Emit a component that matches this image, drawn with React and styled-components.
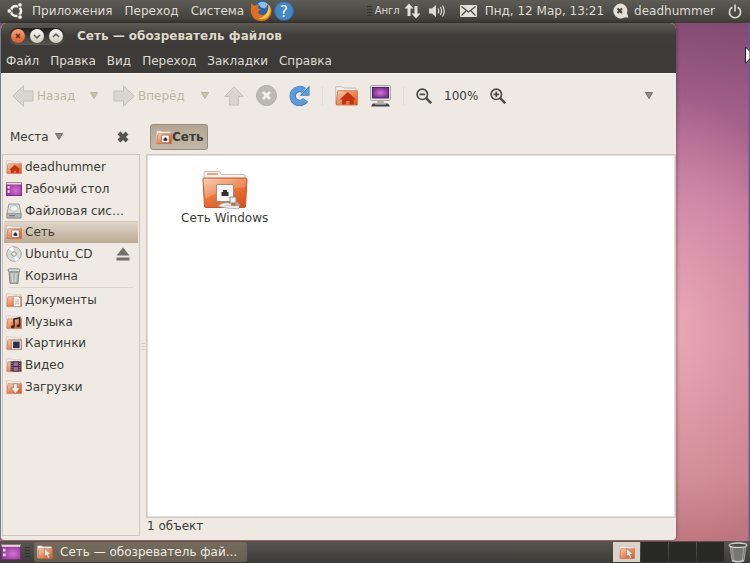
import styled, { createGlobalStyle } from 'styled-components';

const Global = createGlobalStyle`
  * { box-sizing: border-box; }
  body {
    margin: 0;
    font-family: "DejaVu Sans", sans-serif;
    font-size: 12px;
    line-height: 16px;
    color: #3c3b37;
  }
  button {
    margin: 0;
    padding: 0;
    border: 0;
    background: none;
    color: inherit;
    font: inherit;
    white-space: nowrap;
  }
  svg { display: block; flex: none; }
`;

const Desktop = styled.div`
  min-height: 100vh;
  display: flex;
  flex-direction: column;
  background:
    linear-gradient(to right, transparent calc(100% - 2px), #6a5a9c calc(100% - 1px)),
    radial-gradient(ellipse 130px 230px at calc(100% - 74px) 58%, rgba(255, 196, 204, 0.6), transparent),
    linear-gradient(to bottom left, rgba(60, 30, 70, 0.2), transparent 20%),
    linear-gradient(#8a4f75, #ac6690 20%, #c2759a 38%, #ca8095 62%, #c98089 85%, #b8707b);
`;

const Panel = styled.header`
  height: 23px;
  padding: 0 8px 1px 7px;
  display: flex;
  align-items: center;
  color: #dfdbd2;
  background: linear-gradient(#5c5b54, #45443f 80%, #3c3b37);
`;

const PanelMenus = styled.nav`
  display: flex;
  gap: 12px;
  margin: 0 6px 0 8px;
`;

const Tray = styled.div`
  display: flex;
  align-items: center;
  gap: 4px;
  margin-left: auto;
`;

const TrayGroup = styled.div`
  display: flex;
  align-items: center;
  gap: ${p => p.$gap}px;
  margin-right: ${p => p.$after || 0}px;
`;

const TrayText = styled.span`
  white-space: nowrap;
  font-size: ${p => (p.$small ? 10 : 12)}px;
`;

const Grip = styled.span`
  width: 5px;
  height: 11px;
  background: repeating-linear-gradient(#33322e 0 1px, transparent 1px 3px);
`;

const Window = styled.main`
  flex: 1;
  margin: 0 74px 1px 0;
  display: flex;
  flex-direction: column;
  border-left: 1px solid #777d8b;
  border-radius: 6px 6px 4px 4px;
  overflow: hidden;
  background: #eeeae3;
  box-shadow: 0 0 4px rgba(0, 0, 0, 0.4);
`;

const TitleBar = styled.div`
  height: 26px;
  padding-left: 8px;
  display: flex;
  align-items: center;
  gap: 12px;
  background: linear-gradient(#5b5a54, #3e3d39 50%, #3c3b37);
`;

const Title = styled.h1`
  margin: 0;
  font-size: 12px;
  color: #dfd8c8;
`;

const WindowButtons = styled.div`
  height: 17px;
  padding: 0 2px;
  display: flex;
  align-items: center;
  gap: 5px;
  border-radius: 9px;
  background: linear-gradient(#22211e, #5b5a53);
`;

const RoundButton = styled.button`
  width: 14px;
  height: 14px;
  border-radius: 50%;
  color: ${p => (p.$close ? '#6b2c15' : '#5c5a52')};
  background: ${p => (p.$close ? 'linear-gradient(#f6a27e, #df5a2c)' : 'linear-gradient(#fbfaf7, #cfcbc0)')};
`;

const MenuBar = styled.nav`
  height: 24px;
  padding: 0 0 1px 5px;
  display: flex;
  align-items: center;
  gap: 11px;
  color: #dfdbd2;
  background: #3c3b37;
`;

const Toolbar = styled.div`
  height: 46px;
  padding: 0 20px 2px 11px;
  display: flex;
  align-items: center;
  gap: 12px;
  border-top: 1px solid #f8f6f0;
`;

const Split = styled.div`
  display: flex;
`;

const ToolButton = styled.button`
  width: ${p => p.$w}px;
  display: flex;
  align-items: center;
  gap: 3px;
  &:disabled { color: #bdb5a4; }
`;

const DropButton = styled.button`
  width: 14px;
  display: flex;
  align-items: center;
  justify-content: center;
  color: ${p => (p.$dark ? '#6f6d66' : '#bbb39c')};
  margin-left: ${p => (p.$end ? 'auto' : 0)};
`;

const Separator = styled.span`
  width: 1px;
  height: 18px;
  background: #dfdacf;
`;

const Body = styled.div`
  flex: 1;
  display: grid;
  grid-template-columns: 138px 4px minmax(0, 1fr);
  grid-template-rows: 35px 1fr;
  column-gap: 1px;
  padding-left: 1px;
`;

const PlacesHead = styled.div`
  padding: 0 11px 0 8px;
  display: flex;
  align-items: center;
  justify-content: space-between;
`;

const PathBar = styled.div`
  grid-column: 3;
  display: flex;
  align-items: center;
  padding-left: 4px;
`;

const PathButton = styled.button`
  height: 26px;
  padding: 0 3px 0 5px;
  display: flex;
  align-items: center;
  border: 1px solid #988d7b;
  border-radius: 3px;
  font-weight: bold;
  background: linear-gradient(#b3a793, #c3b8a6);
`;

const Sidebar = styled.aside`
  margin-bottom: 4px;
  padding: 1px;
  border: 1px solid #cdc7bb;
  background: #efebe4;
`;

const Places = styled.ul`
  margin: 0;
  padding: 0;
  list-style: none;
  display: grid;
  grid-template-columns: minmax(0, 1fr);
  grid-auto-rows: 1fr;
  height: ${p => p.$height}px;
`;

const PlaceButton = styled.button`
  width: 100%;
  height: 100%;
  padding: 0 8px 0 2px;
  display: flex;
  align-items: center;
  gap: 3px;
  text-align: left;
  border-top: 1px solid ${p => (p.$active ? '#d3c8b8' : 'transparent')};
  background: ${p => (p.$active ? 'linear-gradient(#ded5c8, #bcaa95)' : 'none')};
  span { flex: 1; min-width: 0; overflow: hidden; text-overflow: ellipsis; }
`;

const Rule = styled.hr`
  height: 1px;
  margin: 1px 5px;
  border: 0;
  background: #dcd6ca;
`;

const Handle = styled.div`
  align-self: center;
  height: 8px;
  background: repeating-linear-gradient(#d3cdc1 0 1px, transparent 1px 3px);
`;

const Content = styled.section`
  display: flex;
  flex-direction: column;
`;

const Files = styled.div`
  flex: 1;
  padding: 15px 34px;
  border: 1px solid #cfc9bd;
  outline: 1px solid #e3ded4;
  outline-offset: -2px;
  background: #fff;
`;

const File = styled.button`
  display: flex;
  flex-direction: column;
  align-items: center;
`;

const Status = styled.footer`
  height: 22px;
  padding: 0 1px;
`;

const Taskbar = styled.footer`
  height: 22px;
  padding-left: 1px;
  display: flex;
  align-items: center;
  gap: 4px;
  background: linear-gradient(#56554f, #3c3b37);
`;

const Task = styled.button`
  width: 213px;
  height: 20px;
  padding: 0 2px 0 3px;
  display: flex;
  align-items: center;
  gap: 7px;
  border-radius: 3px;
  color: #eeebe4;
  background: linear-gradient(#756c5d, #665e50);
`;

const Workspaces = styled.div`
  display: flex;
  gap: 1px;
  margin-left: auto;
`;

const Workspace = styled.button`
  width: 27px;
  height: 20px;
  display: flex;
  align-items: center;
  justify-content: center;
  background: ${p => (p.$active ? '#d9d3c8' : '#292926')};
`;

const Triangle = () => (
  <svg width="8" height="7" viewBox="0 0 8 7"><path d="M0.5 0.5h7L4 6.5z" fill="currentColor" fillOpacity=".75" stroke="currentColor" /></svg>
);

const emblems = {
  home: <path d="M3.500 11L9.500 5.500l6 5.500h-1.700V14.500h-3V12H8.200v2.500h-3V11z" fill="#c23410" />,
  network: <g><rect x="6" y="6" width="8" height="8" rx="1" fill="#fff" stroke="#7b4a38" strokeWidth=".6" /><path d="M8 12V9.500h1V8.500h2v1h1V12z" fill="#222" /></g>,
  documents: <g><path d="M8 4h5l2.500 2.500V15H8z" fill="#f8f7f4" stroke="#98948b" strokeWidth=".7" /><path d="M9.500 8h4.500M9.500 10h4.500M9.500 12h4.500" stroke="#aaa69d" strokeWidth=".8" /></g>,
  music: <path d="M8.500 12.500V5l6-1.500v8" fill="none" stroke="#2e2d2b" strokeWidth="1.700" />,
  pictures: <g><rect x="6" y="5" width="10" height="10" fill="#efeeeb" stroke="#8b8880" strokeWidth=".7" /><rect x="7.500" y="6.500" width="7" height="7" fill="#2f2e47" /></g>,
  video: <g><path d="M5 4h11v11H5z" fill="#3a2c3a" /><path d="M8 5h5v4H8zM8 10h5v4H8z" fill="#9c6c9d" /><path d="M6.300 4v11M14.700 4v11" stroke="#ddd" strokeWidth=".9" strokeDasharray="1 1" /></g>,
  downloads: <path d="M8 4.500h4V9h3l-5 6-5-6h3z" fill="#eeede9" stroke="#8b8780" strokeWidth=".8" />,
  cursor: <path d="M8 4l7 6.500h-3l1.500 3.500-1.800.8-1.500-3.500L8 13z" fill="#e8e5de" stroke="#877b70" strokeWidth=".7" />,
};

const musicNotes = <g fill="#2e2d2b"><ellipse cx="7.200" cy="13" rx="2" ry="1.600" /><ellipse cx="13.200" cy="12" rx="2" ry="1.600" /></g>;

const FolderIcon = ({ kind, size = 16 }) => (
  <svg width={size} height={size} viewBox="0 0 17 16">
    <defs>
      <linearGradient id={`folder-${kind}`} x2="1" y2="1">
        <stop offset="0" stopColor="#f9d2b9" />
        <stop offset=".5" stopColor="#ee8a5a" />
        <stop offset="1" stopColor="#d94f20" />
      </linearGradient>
    </defs>
    <path d="M.5 14V1.500h5l1 1h9V6H2z" fill="#f5f1ec" stroke="#c9b8ab" strokeWidth=".7" />
    <path d="M2 4.500h14.500V15H1z" fill={`url(#folder-${kind})`} stroke="#c6683f" strokeWidth=".6" />
    {emblems[kind]}
    {kind === 'music' && musicNotes}
  </svg>
);

const DesktopIcon = ({ width = 16, height = 14 }) => (
  <svg width={width} height={height} viewBox="0 0 20 17" preserveAspectRatio="none">
    <defs>
      <radialGradient id="desk" cx=".6" cy=".6"><stop stopColor="#d573d5" /><stop offset="1" stopColor="#9a3aa0" /></radialGradient>
    </defs>
    <path d="M0 0h20v17H0z" fill="url(#desk)" />
    <path d="M0 0h20v3H0z" fill="#e3ddcf" />
    <path d="M2 5h2.500v3H2zM2 10h2.500v3H2z" fill="#f6e4f6" />
    <path d="M.5.5h19v16H.5z" fill="none" stroke="#572259" strokeOpacity=".6" />
  </svg>
);

const DriveIcon = () => (
  <svg width="16" height="16" viewBox="0 0 16 16">
    <path d="M3 1h10l2 9v5H1v-5z" fill="#dcdcda" stroke="#8a8a88" strokeWidth=".8" />
    <ellipse cx="8" cy="5.500" rx="4" ry="3" fill="#f4f4f3" stroke="#b2b2b0" strokeWidth=".7" />
    <path d="M1 10.500h14V15H1z" fill="#b3b3b1" stroke="#80807e" strokeWidth=".6" />
    <path d="M3 12.700h6" stroke="#6d6d6b" />
  </svg>
);

const DiscIcon = () => (
  <svg width="16" height="16" viewBox="0 0 16 16">
    <circle cx="8" cy="8" r="7.300" fill="#d9d9d7" stroke="#969694" strokeWidth=".8" />
    <path d="M8 8L3 2.700A7 7 0 0 1 7 1zM8 8l5 5.300A7 7 0 0 1 9 15z" fill="#fff" />
    <circle cx="8" cy="8" r="2.300" fill="#f3f0ea" stroke="#8f8f8d" />
  </svg>
);

const BinIcon = () => (
  <svg width="16" height="16" viewBox="0 0 16 16">
    <path d="M3 3h10l-1 12.300H4z" fill="#b5b6b3" stroke="#6e6f6b" strokeWidth=".8" />
    <path d="M6 5l.5 9M10 5l-.5 9" stroke="#e1e1df" />
    <rect x="2.200" y=".8" width="11.600" height="3" rx="1.200" fill="#deded9" stroke="#777874" strokeWidth=".8" />
  </svg>
);

const TrashIcon = () => (
  <svg width="20" height="21" viewBox="0 0 20 21">
    <path d="M2 3h16l-2 15.500q-6 2-12 0z" fill="#767773" stroke="#9fa09c" />
    <path d="M4.500 6l1 12M15.500 6l-1 12" stroke="#b4b5b1" strokeOpacity=".7" />
    <path d="M4 18.500q6 2.500 12 0" fill="none" stroke="#d0d0cd" strokeWidth="1.500" />
    <ellipse cx="10" cy="3.200" rx="8.800" ry="2.200" fill="#4b4c48" stroke="#cfd0cc" strokeWidth="1.300" />
  </svg>
);

const EjectIcon = () => (
  <svg width="14" height="14" viewBox="0 0 14 14"><path d="M7 .5l6.500 8H.5zM.5 10.500h13v3H.5z" fill="#706f6a" /></svg>
);

const Arrow = ({ turn = 0, size = 22 }) => (
  <svg width={size} height={size} viewBox="0 0 22 22">
    <path d="M.8 11L11.500.8V6H21v10h-9.500v5.200z" transform={`rotate(${turn} 11 11)`} fill="#d9d6cf" stroke="#c1beb6" />
  </svg>
);

const StopIcon = () => (
  <svg width="21" height="21" viewBox="0 0 21 21">
    <circle cx="10.500" cy="10.500" r="10" fill="#bbb9b4" stroke="#aeaca7" />
    <path d="M7 7l7 7M14 7l-7 7" stroke="#f2f0eb" strokeWidth="2.800" />
  </svg>
);

const ReloadIcon = () => (
  <svg width="21" height="21" viewBox="0 0 21 21">
    <path d="M16.500 15A7 7 0 1 1 15 5.500" fill="none" stroke="#4180c0" strokeWidth="6.500" />
    <path d="M20.500.5v10.300h-10z" fill="#4180c0" />
    <path d="M16.200 14.700A7 7 0 1 1 15 5.500" fill="none" stroke="#5f9bd8" strokeWidth="5" />
    <path d="M19.700 2.500v7.500h-7z" fill="#5f9bd8" />
  </svg>
);

const ComputerIcon = () => (
  <svg width="21" height="22" viewBox="0 0 21 22">
    <defs><radialGradient id="screen"><stop stopColor="#d672d3" /><stop offset="1" stopColor="#7c3590" /></radialGradient></defs>
    <rect x=".5" y=".5" width="20" height="15" rx="1" fill="#e2e1df" stroke="#aaa9a7" />
    <rect x="2.500" y="2.500" width="16" height="10.500" fill="url(#screen)" stroke="#4d2859" />
    <path d="M7.500 16h6l1 2.500h-8z" fill="#b6b5b2" />
    <path d="M3 18.500h15l2 3H1z" fill="#43423f" /><path d="M5 19h11" stroke="#cecdca" />
  </svg>
);

const ZoomIcon = ({ plus }) => (
  <svg width="16" height="16" viewBox="0 0 16 16" fill="none" stroke="#4c4b47">
    <circle cx="6.300" cy="6.300" r="5.200" strokeWidth="1.700" />
    <path d="M10.200 10.200l5 5" strokeWidth="2.500" />
    <path d={plus ? 'M3.500 6.300h5.600M6.300 3.500v5.600' : 'M3.500 6.300h5.600'} strokeWidth="1.700" />
  </svg>
);

const CloseIcon = () => (
  <svg width="12" height="12" viewBox="0 0 12 12"><path d="M2 2l8 8M10 2l-8 8" stroke="#55534e" strokeWidth="4" /></svg>
);

const UbuntuIcon = () => (
  <svg width="17" height="18" viewBox="0 0 17 18">
    <circle cx="9" cy="9" r="5" fill="none" stroke="#f0eee8" strokeWidth="2.600" strokeDasharray="9 1.470" strokeDashoffset="4.500" />
    <g fill="#f5f3ee" stroke="#504f49" strokeWidth=".7">
      <circle cx="2.300" cy="9" r="2.200" /><circle cx="13" cy="2.900" r="2.200" /><circle cx="13" cy="15.100" r="2.200" />
    </g>
  </svg>
);

const FirefoxIcon = () => (
  <svg width="22" height="22" viewBox="0 0 22 22">
    <circle cx="11.500" cy="10.500" r="9.500" fill="#2b62ac" />
    <path d="M8 3.500c3-3 8-2 10 1l-3 4-4-1z" fill="#83c4ee" />
    <path d="M1.500 3.500l3 2.500C6 4.500 8 4.500 9 5L7.500 8l3.500 1.500-3 2c0 4 6 5 9 1 2-3 1.500-6 .5-9 4 3 5 8 3 12-2.500 5-8 7-13 5C1.500 18.500-.5 11 1.500 3.500z" fill="#e2701b" />
    <path d="M18.500 4.500c3.500 5 2 10-1.500 13-3 2-6 2-8.500 1C14 17.500 19 13 18.500 4.500z" fill="#f8c63a" />
  </svg>
);

const HelpIcon = () => (
  <svg width="20" height="20" viewBox="0 0 20 20">
    <circle cx="10" cy="10" r="9.500" fill="#4686c5" stroke="#2d68a6" />
    <text x="10" y="15.500" textAnchor="middle" fontSize="15" fill="#fff" fontFamily="DejaVu Sans">?</text>
  </svg>
);

const TransferIcon = () => (
  <svg width="17" height="16" viewBox="0 0 17 16" fill="#e5e1d8"><path d="M5 .5l4.500 5h-3V13h-3V5.500h-3zM12 15.500l4.500-5h-3V3h-3v7.500h-3z" /></svg>
);

const VolumeIcon = () => (
  <svg width="16" height="14" viewBox="0 0 16 14">
    <path d="M0 4.500h3L7 1v12L3 9.500H0z" fill="#dfdbd2" />
    <path d="M9 4.500q1.500 2.500 0 5M11.300 3q2.500 4 0 8M13.500 1.500q3.500 5.500 0 11" fill="none" stroke="#dfdbd2" strokeWidth="1.200" />
  </svg>
);

const MailIcon = () => (
  <svg width="17" height="12" viewBox="0 0 17 12">
    <rect width="17" height="12" rx="1" fill="#e4e0d7" />
    <path d="M1.500 1.500l7 5.500 7-5.500M1.500 10.500L6 6M15.500 10.500L11 6" fill="none" stroke="#4a4943" strokeWidth="1.200" />
  </svg>
);

const ChatIcon = () => (
  <svg width="17" height="16" viewBox="0 0 17 16">
    <path d="M8 .5a7.300 7.300 0 0 1 7 9.500l1.500 4.500h-4A7.500 7.500 0 1 1 8 .5z" fill="#e4e0d7" />
    <path d="M5.500 5.500l4.500 4.500M10 5.500L5.500 10" stroke="#45443f" strokeWidth="2" />
  </svg>
);

const PowerIcon = () => (
  <svg width="14" height="15" viewBox="0 0 14 15" fill="none" stroke="#dfdbd2" strokeWidth="1.600">
    <path d="M4.300 3.300a5.600 5.600 0 1 0 5.400 0M7 .5v7" />
  </svg>
);

const NetworkFolder = () => (
  <svg width="46" height="40" viewBox="0 0 46 40">
    <defs>
      <linearGradient id="big-folder" x2=".7" y2="1"><stop stopColor="#f9c9a6" /><stop offset=".5" stopColor="#ec773c" /><stop offset="1" stopColor="#dc5420" /></linearGradient>
    </defs>
    <path d="M2 10V2.500q0-1 1-1h14.500l2 3H42q1 0 1 1V10z" fill="#f7f4ef" stroke="#c3bab0" />
    <path d="M5 4h11" stroke="#e58b61" strokeWidth="1.500" />
    <path d="M1 9.500q0-1.500 1.500-1.500h41q1.500 0 1.500 1.500L43.500 36q0 1.500-1.500 1.500H4Q2.500 37.500 2.500 36z" fill="url(#big-folder)" stroke="#c6592a" />
    <path d="M2 9h42l-.5 8Q20 19 3 29z" fill="#fff" fillOpacity=".2" />
    <rect x="14.500" y="14.500" width="17" height="17" rx="1.500" fill="#f8f7f5" stroke="#9f8b80" />
    <path d="M19.500 26v-4H21v-2h4v2h1.500v4z" fill="#333" />
    <path d="M28 27h6v6h-6z" fill="#eeeeec" stroke="#8e8b86" />
    <path d="M29 35q-7-2-10 .5 7 2 18 1.500M34 33l3 3" fill="none" stroke="#aaa8a3" strokeWidth="3.500" />
    <path d="M29 35q-7-2-10 .5 7 2 18 1.500" fill="none" stroke="#f3f1ed" strokeWidth="1.800" />
  </svg>
);

const Pointer = styled.svg`
  position: absolute;
  top: 46px;
  right: 0;
`;

const places = [
  ['deadhummer', <FolderIcon kind="home" />],
  ['Рабочий стол', <DesktopIcon />],
  ['Файловая система', <DriveIcon />],
  ['Сеть', <FolderIcon kind="network" />],
  ['Ubuntu_CD', <DiscIcon />],
  ['Корзина', <BinIcon />],
];

const bookmarks = [
  ['Документы', <FolderIcon kind="documents" />],
  ['Музыка', <FolderIcon kind="music" />],
  ['Картинки', <FolderIcon kind="pictures" />],
  ['Видео', <FolderIcon kind="video" />],
  ['Загрузки', <FolderIcon kind="downloads" />],
];

const PlaceList = ({ items, height }) => (
  <Places $height={height}>
    {items.map(([name, icon]) => (
      <li key={name}>
        <PlaceButton $active={name === 'Сеть'}>
          {icon}
          <span>{name}</span>
          {name === 'Ubuntu_CD' && <EjectIcon />}
        </PlaceButton>
      </li>
    ))}
  </Places>
);

export default function App() {
  return (
    <Desktop>
      <Global />
      <Panel>
        <UbuntuIcon />
        <PanelMenus>
          {['Приложения', 'Переход', 'Система'].map(m => <button key={m}>{m}</button>)}
        </PanelMenus>
        <TrayGroup $gap={2}>
          <FirefoxIcon />
          <HelpIcon />
        </TrayGroup>
        <Tray>
          <TrayGroup $gap={3}>
            <Grip />
            <TrayText $small>Англ</TrayText>
          </TrayGroup>
          <TrayGroup $gap={8} $after={11}>
            <TransferIcon />
            <VolumeIcon />
          </TrayGroup>
          <TrayGroup $gap={8} $after={4}>
            <MailIcon />
            <TrayText>Пнд, 12 Мар, 13:21</TrayText>
          </TrayGroup>
          <TrayGroup $gap={5} $after={9}>
            <ChatIcon />
            <TrayText>deadhummer</TrayText>
          </TrayGroup>
          <PowerIcon />
        </Tray>
      </Panel>

      <Window>
        <TitleBar>
          <WindowButtons>
            <RoundButton $close aria-label="Закрыть">
              <svg width="14" height="14"><path d="M5 5l4 4M9 5l-4 4" stroke="currentColor" strokeWidth="1.500" /></svg>
            </RoundButton>
            <RoundButton aria-label="Свернуть">
              <svg width="14" height="14"><path d="M4 6l3 3 3-3" fill="none" stroke="currentColor" strokeWidth="1.500" /></svg>
            </RoundButton>
            <RoundButton aria-label="Развернуть">
              <svg width="14" height="14"><path d="M4 8l3-3 3 3" fill="none" stroke="currentColor" strokeWidth="1.500" /></svg>
            </RoundButton>
          </WindowButtons>
          <Title>Сеть — обозреватель файлов</Title>
        </TitleBar>
        <MenuBar>
          {['Файл', 'Правка', 'Вид', 'Переход', 'Закладки', 'Справка'].map(m => <button key={m}>{m}</button>)}
        </MenuBar>
        <Toolbar>
          <Split>
            <ToolButton $w={75} disabled><Arrow />Назад</ToolButton>
            <DropButton aria-label="История назад"><Triangle /></DropButton>
          </Split>
          <Split>
            <ToolButton $w={85} disabled><Arrow turn={180} />Вперёд</ToolButton>
            <DropButton aria-label="История вперёд"><Triangle /></DropButton>
          </Split>
          <ToolButton $w={20} disabled aria-label="Вверх"><Arrow turn={90} size={20} /></ToolButton>
          <ToolButton $w={21} disabled aria-label="Остановить"><StopIcon /></ToolButton>
          <ToolButton $w={21} aria-label="Обновить"><ReloadIcon /></ToolButton>
          <Separator />
          <ToolButton $w={23} aria-label="Домашняя папка"><FolderIcon kind="home" size={23} /></ToolButton>
          <ToolButton $w={21} aria-label="Компьютер"><ComputerIcon /></ToolButton>
          <Separator />
          <ToolButton $w={16} aria-label="Уменьшить"><ZoomIcon /></ToolButton>
          <ToolButton $w={34}>100%</ToolButton>
          <ToolButton $w={16} aria-label="Увеличить"><ZoomIcon plus /></ToolButton>
          <DropButton $dark $end aria-label="Вид"><Triangle /></DropButton>
        </Toolbar>
        <Body>
          <PlacesHead>
            <ToolButton>Места<DropButton as="span" $dark><Triangle /></DropButton></ToolButton>
            <button aria-label="Закрыть боковую панель"><CloseIcon /></button>
          </PlacesHead>
          <PathBar>
            <PathButton><FolderIcon kind="network" />Сеть</PathButton>
          </PathBar>
          <Sidebar>
            <PlaceList items={places} height={130} />
            <Rule />
            <PlaceList items={bookmarks} height={108} />
          </Sidebar>
          <Handle />
          <Content>
            <Files>
              <File><NetworkFolder />Сеть Windows</File>
            </Files>
            <Status>1 объект</Status>
          </Content>
        </Body>
      </Window>

      <Taskbar>
        <button aria-label="Показать рабочий стол"><DesktopIcon width={20} height={16} /></button>
        <Grip />
        <Task><FolderIcon kind="cursor" />Сеть — обозреватель фай...</Task>
        <Workspaces>
          <Workspace $active aria-label="Рабочее место 1"><FolderIcon kind="cursor" /></Workspace>
          <Workspace aria-label="Рабочее место 2" />
          <Workspace aria-label="Рабочее место 3" />
          <Workspace aria-label="Рабочее место 4" />
        </Workspaces>
        <TrayGroup $after={2}><TrashIcon /></TrayGroup>
      </Taskbar>

      <Pointer width="5" height="18" viewBox="0 0 5 18"><path d="M.5 1v16l4.500-4V5.500z" fill="#fff" stroke="#211a2c" /></Pointer>
    </Desktop>
  );
}
